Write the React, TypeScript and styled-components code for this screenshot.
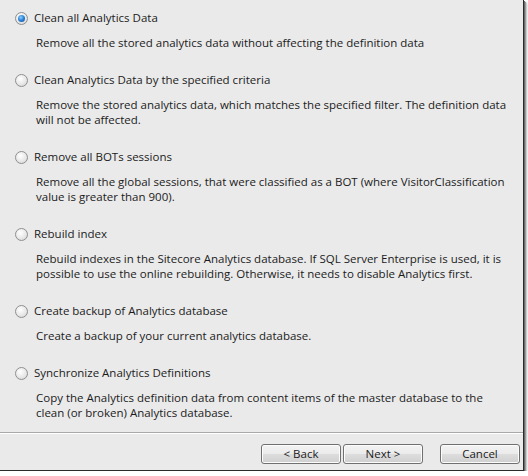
import React from "react";
import styled, { createGlobalStyle } from "styled-components";

const Global = createGlobalStyle`
  html, body { margin: 0; padding: 0; background: #ffffff; }
  body { font-family: "Open Sans", "Noto Sans", sans-serif; }
`;

const Window = styled.div`
  width: 523px;
  height: 470px;
  background: #eaeaea;
  border-right: 1px solid #2a2a2a;
  border-bottom: 1px solid #2a2a2a;
  box-shadow: 1px 1px 0 #6a6a6a, 2px 2px 1px #9a9a9a, 3px 3px 2px #c4c4c4;
  display: flex;
  flex-direction: column;
  color: #1b1b1b;
  font-size: 11.5px;
`;

const Options = styled.div`
  flex: 1;
  display: flex;
  flex-direction: column;
  gap: 22px;
  padding: 10px 0 0 15px;
`;

const Item = styled.div`
  display: flex;
  flex-direction: column;
`;

const LabelRow = styled.label`
  display: flex;
  align-items: center;
  gap: 6px;
  height: 16px;
  line-height: 16px;
`;

const Radio = styled.span<{ $checked?: boolean }>`
  box-sizing: border-box;
  width: 13px;
  height: 13px;
  border-radius: 50%;
  border: 1px solid #8e8f8f;
  background: radial-gradient(circle at 40% 35%, #ffffff 0%, #e8e8e8 55%, #cfcfcf 100%);
  display: flex;
  align-items: center;
  justify-content: center;
  flex: none;
  &::after {
    content: "";
    display: ${(p) => (p.$checked ? "block" : "none")};
    width: 7px;
    height: 7px;
    border-radius: 50%;
    background: radial-gradient(circle at 40% 35%, #8ad0ff 0%, #2a7fd4 50%, #0b4f9c 100%);
  }
`;

const Desc = styled.div`
  margin-top: 9px;
  padding-left: 21px;
  padding-right: 12px;
  line-height: 15px;
`;

const Separator = styled.div`
  border-top: 1px solid #a8a8a8;
  border-bottom: 1px solid #ffffff;
`;

const Footer = styled.div`
  height: 36px;
  display: flex;
  justify-content: flex-end;
  align-items: flex-start;
  padding: 10px 3px 0 0;
  box-sizing: border-box;
  gap: 2px;
`;

const Button = styled.button<{ $gapLeft?: boolean }>`
  box-sizing: border-box;
  width: 80px;
  height: 20px;
  margin-left: ${(p) => (p.$gapLeft ? "15px" : "0")};
  border: 1px solid #707070;
  border-radius: 3px;
  background: linear-gradient(#f3f3f3 0%, #ebebeb 48%, #dddddd 52%, #cfcfcf 100%);
  box-shadow: inset 0 0 0 1px #fcfcfc;
  font-family: inherit;
  font-size: 11.5px;
  color: #1b1b1b;
  padding: 0;
  line-height: 16px;
`;

const options = [
  {
    label: "Clean all Analytics Data",
    desc: "Remove all the stored analytics data without affecting the definition data",
    checked: true,
  },
  {
    label: "Clean Analytics Data by the specified criteria",
    desc: "Remove the stored analytics data, which matches the specified filter. The definition data will not be affected.",
  },
  {
    label: "Remove all BOTs sessions",
    desc: "Remove all the global sessions, that were classified as a BOT (where VisitorClassification value is greater than 900).",
  },
  {
    label: "Rebuild index",
    desc: "Rebuild indexes in the Sitecore Analytics database. If SQL Server Enterprise is used, it is possible to use the online rebuilding. Otherwise, it needs to disable Analytics first.",
  },
  {
    label: "Create backup of Analytics database",
    desc: "Create a backup of your current analytics database.",
  },
  {
    label: "Synchronize Analytics Definitions",
    desc: "Copy the Analytics definition data from content items of the master database to the clean (or broken) Analytics database.",
  },
];

export default function App() {
  return (
    <>
      <Global />
      <Window>
        <Options>
          {options.map((o) => (
            <Item key={o.label}>
              <LabelRow>
                <Radio $checked={o.checked} />
                {o.label}
              </LabelRow>
              <Desc>{o.desc}</Desc>
            </Item>
          ))}
        </Options>
        <Separator />
        <Footer>
          <Button>&lt; Back</Button>
          <Button>Next &gt;</Button>
          <Button $gapLeft>Cancel</Button>
        </Footer>
      </Window>
    </>
  );
}
